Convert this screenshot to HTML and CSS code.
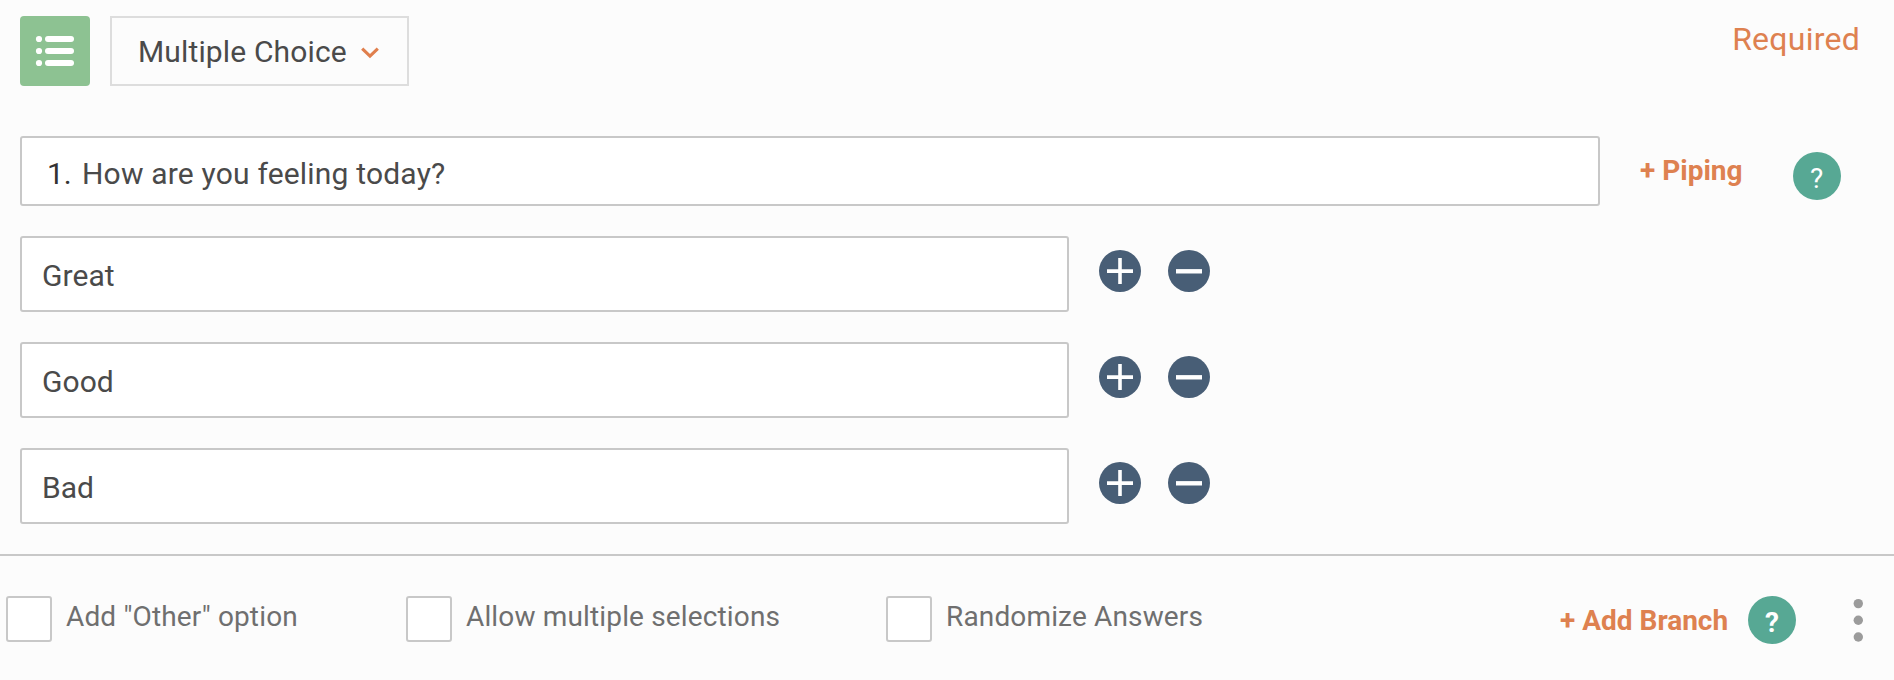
FILE: index.html
```
<!DOCTYPE html>
<html lang="en">
<head>
<meta charset="utf-8">
<title>Question editor</title>
<link rel="stylesheet" href="styles.css">
</head>
<body>
<main class="editor">
  <header class="top">
    <div class="type-icon">
      <svg width="70" height="70" viewBox="0 0 70 70" fill="#fff">
        <circle cx="19" cy="23" r="3.1"/><rect x="25" y="20" width="29" height="6" rx="3"/>
        <circle cx="19" cy="35" r="3.1"/><rect x="25" y="32" width="29" height="6" rx="3"/>
        <circle cx="19" cy="47" r="3.1"/><rect x="25" y="44" width="29" height="6" rx="3"/>
      </svg>
    </div>
    <div class="type-select">
      <span class="type-name">Multiple Choice</span>
      <svg class="chevron" width="18" height="12" viewBox="0 0 18 12" fill="none" stroke="#e07f4d" stroke-width="3.1"><path d="M1.2 1.6 9 9.2 16.8 1.6"/></svg>
    </div>
    <span class="required">Required</span>
  </header>

  <section class="question">
    <div class="question-field"><span class="number">1.</span><span class="question-text">How are you feeling today?</span></div>
    <span class="action piping">+ Piping</span>
    <span class="help help-light">?</span>
  </section>

  <section class="options">
    <div class="option">
      <div class="option-field">Great</div>
      <svg class="round" viewBox="0 0 42 42"><circle cx="21" cy="21" r="21"/><path d="M8 21.1H34M21 8V34"/></svg>
      <svg class="round" viewBox="0 0 42 42"><circle cx="21" cy="21" r="21"/><path class="minus" d="M8 21.3H34"/></svg>
    </div>
    <div class="option">
      <div class="option-field">Good</div>
      <svg class="round" viewBox="0 0 42 42"><circle cx="21" cy="21" r="21"/><path d="M8 21.1H34M21 8V34"/></svg>
      <svg class="round" viewBox="0 0 42 42"><circle cx="21" cy="21" r="21"/><path class="minus" d="M8 21.3H34"/></svg>
    </div>
    <div class="option">
      <div class="option-field">Bad</div>
      <svg class="round" viewBox="0 0 42 42"><circle cx="21" cy="21" r="21"/><path d="M8 21.1H34M21 8V34"/></svg>
      <svg class="round" viewBox="0 0 42 42"><circle cx="21" cy="21" r="21"/><path class="minus" d="M8 21.3H34"/></svg>
    </div>
  </section>

  <footer class="settings">
    <div class="check check-other"><span class="box"></span><span class="label">Add "Other" option</span></div>
    <div class="check check-multiple"><span class="box"></span><span class="label">Allow multiple selections</span></div>
    <div class="check"><span class="box"></span><span class="label">Randomize Answers</span></div>
    <div class="branch">
      <span class="action add-branch">+ Add Branch</span>
      <span class="help">?</span>
      <svg class="more" width="10" height="44" viewBox="0 0 10 44" fill="#9b9b9b"><circle cx="5.3" cy="5.6" r="4.7"/><circle cx="5.3" cy="22.3" r="4.7"/><circle cx="5.3" cy="39" r="4.7"/></svg>
    </div>
  </footer>
</main>
</body>
</html>
```
FILE: styles.css
```
* { box-sizing: border-box; }
body {
  margin: 0;
  background: #fcfcfc;
  color: #4a4a4a;
  font-family: Roboto, sans-serif;
  font-size: 30px;
  line-height: 36px;
}
svg { display: block; flex: none; }
span { white-space: nowrap; }
.editor { height: 680px; overflow: hidden; }

.top { display: flex; padding: 16px 34px 0 20px; }
.type-icon { width: 70px; height: 70px; border-radius: 4px; background: #8dc292; }
.type-select {
  display: flex;
  align-items: center;
  width: 299px;
  height: 70px;
  margin-left: 20px;
  padding: 1px 0 0 26px;
  border: 2px solid #ddd;
}
.type-name { width: 223px; letter-spacing: 0.14px; }
.chevron { margin-top: 3px; }
.required {
  margin-left: auto;
  padding-top: 5px;
  color: #de8150;
  font-size: 32px;
  letter-spacing: 0.25px;
}

.question { display: flex; margin-top: 50px; padding-left: 20px; }
.question-field {
  display: flex;
  width: 1580px;
  height: 70px;
  padding: 18px 0 0 25px;
  border: 2px solid #c8c8c8;
  border-radius: 3px;
  background: #fff;
}
.number { width: 35px; color: #333; }
.question-text { letter-spacing: 0.19px; }
.action { color: #de8150; font-size: 28px; font-weight: 700; }
.piping { width: 153px; margin-left: 40px; padding-top: 17px; }
.help {
  flex: none;
  width: 48px;
  height: 48px;
  border-radius: 50%;
  background: #57a894;
  color: #fff;
  font-size: 28px;
  font-weight: 700;
  line-height: 53px;
  text-align: center;
}
.help-light { margin-top: 16px; padding-right: 1px; font-weight: 400; line-height: 54px; }

.options { display: grid; gap: 30px; padding: 30px 0 30px 20px; }
.option { display: flex; }
.option-field {
  width: 1049px;
  height: 76px;
  margin-right: 3px;
  padding: 20px 0 0 20px;
  border: 2px solid #c8c8c8;
  border-radius: 3px;
  background: #fff;
  letter-spacing: 0.05px;
}
.round {
  width: 42px;
  height: 42px;
  margin: 14px 0 0 27px;
  fill: #485e76;
  stroke: none;
}
.round path { stroke: #fff; stroke-width: 3.6; }
.round .minus { stroke-width: 4.4; }

.settings {
  display: flex;
  height: 126px;
  padding: 40px 31px 0 6px;
  border-top: 2px solid #c8c8c8;
  color: #6f6f6f;
  font-size: 28px;
}
.check { display: flex; gap: 14px; }
.check-other { width: 400px; }
.check-multiple { width: 480px; }
.box { width: 46px; height: 46px; border: 2px solid #c8c8c8; border-radius: 3px; background: #fff; }
.label { padding-top: 3px; letter-spacing: 0.15px; }
.branch { display: flex; margin-left: auto; }
.add-branch { width: 188px; padding-top: 7px; }
.more { margin: 2px 0 0 57px; }
```
